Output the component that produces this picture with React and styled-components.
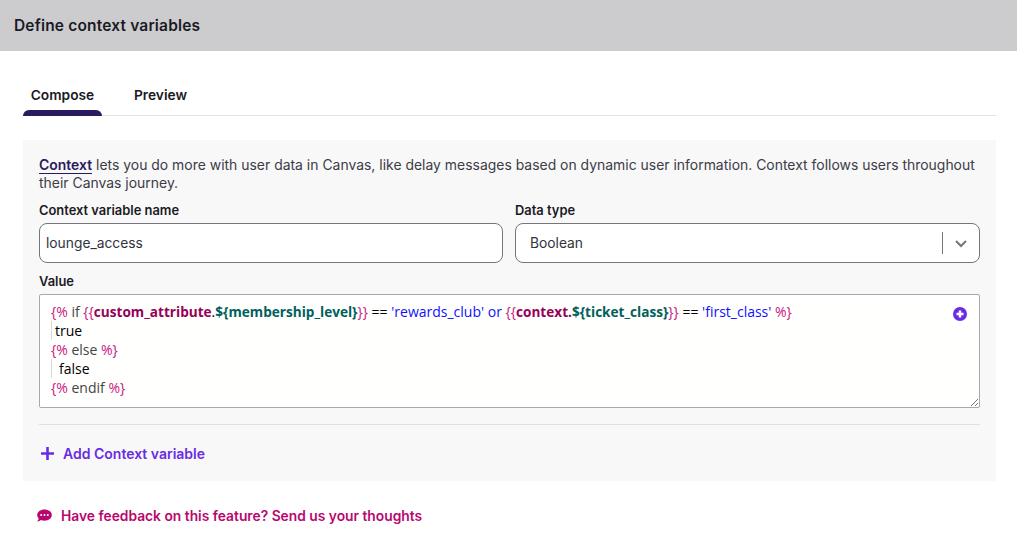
import React from "react";
import styled, { createGlobalStyle } from "styled-components";

const Global = createGlobalStyle`
  html, body { margin: 0; padding: 0; background: #fff; }
  body { font-family: "Inter", "Liberation Sans", sans-serif; color: #1d1b26; width: 1017px; height: 551px; overflow: hidden; }
`;
const Header = styled.header`
  height: 51px; background: #cccccf; display: flex; align-items: center; padding: 0 14px 1px;
  box-sizing: border-box;
  font-size: 15.5px; font-weight: 600; letter-spacing: .17px; color: #1b1a24;
`;
const Main = styled.main`
  padding: 29px 21px 0 23px;
`;
const Tabs = styled.nav`
  display: flex; height: 35px; border-bottom: 1px solid #e3e3e8; box-sizing: content-box;
`;
const Tab = styled.div`
  position: relative; width: ${p => p.$w}px; text-align: center; font-size: 13.75px; font-weight: 600;
  line-height: 30px; color: #1b1a24;
  ${p => p.$active && `
    &::after { content: ""; position: absolute; left: 0; right: 0; bottom: -1px; height: 6px;
      background: #2a1a5e; border-radius: 6px 6px 0 0; }
  `}
`;
const Panel = styled.section`
  margin-top: 24px; background: #f8f8f9; padding: 16px 16px 0; height: 341px; box-sizing: border-box;
`;
const Intro = styled.p`
  margin: 0; font-size: 13.94px; line-height: 18px; color: #3d3c47;
`;
const Strong = styled.span`
  font-weight: 600; color: #2a1a5e; border-bottom: 1px solid #2a1a5e;
`;
const FieldRow = styled.div`
  display: grid; grid-template-columns: 464px 465px; gap: 12px; margin-top: 11px;
`;
const Label = styled.label`
  display: block; font-size: 12.9px; font-weight: 600; line-height: 16px; color: #1b1a24; margin-bottom: 4px;
`;
const Input = styled.div`
  height: 40px; box-sizing: border-box; background: #fff; border: 1px solid #76757e; border-radius: 8px;
  display: flex; align-items: center; padding-left: ${p => p.$pad}px; font-size: 13.8px; color: #33323c;
`;
const SelectSpacer = styled.span`flex: 1;`;
const Sep = styled.span`width: 1px; height: 22px; background: #76757e;`;
const Chevron = styled.span`
  width: 36px; display: flex; justify-content: center; color: #76757e;
`;
const ValueLabel = styled(Label)`margin-top: 11px; margin-bottom: 4px;`;
const Editor = styled.div`
  position: relative; width: 941px; height: 114px; box-sizing: border-box; background: #fffffe;
  border: 1px solid #a9a9ad; border-radius: 2px; padding: 7px 11px;
  font-family: "Open Sans", sans-serif; font-size: 14px; line-height: 19px; color: #000;
`;
const Line = styled.div`
  white-space: pre; height: 19px; display: block;
`;
const Indent = styled.span`
  display: inline-block; height: 19px; vertical-align: top; border-left: 1px solid #d8d8d8; margin-left: 0;
  width: ${p => p.$w}px;
`;
const Delim = styled.span`color: #c9177e;`;
const Kw = styled.span`color: #444;`;
const Blue = styled.span`color: #0f0fff;`;
const Attr = styled.span`font-weight: 700; font-size: 13.6px; color: #970058;`;
const Var = styled.span`font-weight: 700; font-size: 13.6px; color: #00615c;`;
const Insert = styled.span`
  position: absolute; top: 12px; right: 12px; width: 14px; height: 14px; line-height: 0;
`;
const Grip = styled.svg`
  position: absolute; right: 0; bottom: 0;
`;
const Divider = styled.hr`
  width: 941px; margin: 16px 0 0; border: 0; border-top: 1px solid #dfdfe4;
`;
const AddRow = styled.div`
  display: flex; align-items: center; gap: 9px; margin-top: 20px; padding-left: 2px;
  font-size: 14px; font-weight: 600; color: #6a2be2;
`;
const Feedback = styled.div`
  display: flex; align-items: center; gap: 9px; margin-top: 27px; padding-left: 14px;
  font-size: 13.8px; font-weight: 600; color: #b8076f;
`;

export default function App() {
  return (
    <>
      <Global />
      <Header>Define context variables</Header>
      <Main>
        <Tabs>
          <Tab $active $w={79}>Compose</Tab>
          <Tab $w={117}>Preview</Tab>
        </Tabs>
        <Panel>
          <Intro>
            <Strong>Context</Strong> lets you do more with user data in Canvas, like delay messages based on dynamic user information. Context follows users throughout their Canvas journey.
          </Intro>
          <FieldRow>
            <div>
              <Label>Context variable name</Label>
              <Input $pad={6}>lounge_access</Input>
            </div>
            <div>
              <Label>Data type</Label>
              <Input $pad={14}>
                Boolean
                <SelectSpacer />
                <Sep />
                <Chevron>
                  <svg width="14" height="14" viewBox="0 0 14 14" fill="none" stroke="currentColor" strokeWidth="2"><path d="M2 5l5 5 5-5" /></svg>
                </Chevron>
              </Input>
            </div>
          </FieldRow>
          <ValueLabel>Value</ValueLabel>
          <Editor>
            <Line><Delim>{"{%"}</Delim> <Kw>if</Kw> <Delim>{"{{"}</Delim><Attr>custom_attribute</Attr>.<Var>{"${membership_level}"}</Var><Delim>{"}}"}</Delim> == <Blue>'rewards_club'</Blue> <Blue>or</Blue> <Delim>{"{{"}</Delim><Attr>context.</Attr><Var>{"${ticket_class}"}</Var><Delim>{"}}"}</Delim> == <Blue>'first_class'</Blue> <Delim>{"%}"}</Delim></Line>
            <Line><Indent $w={3} />true</Line>
            <Line><Delim>{"{%"}</Delim> <Kw>else</Kw> <Delim>{"%}"}</Delim></Line>
            <Line><Indent $w={7} />false</Line>
            <Line><Delim>{"{%"}</Delim> <Kw>endif</Kw> <Delim>{"%}"}</Delim></Line>
            <Insert>
              <svg width="14" height="14" viewBox="0 0 14 14"><circle cx="7" cy="7" r="7" fill="#6a2be2" /><path d="M7 3.5v7M3.5 7h7" stroke="#fff" strokeWidth="2.4" /></svg>
            </Insert>
            <Grip width="10" height="10" viewBox="0 0 10 10" stroke="#777" strokeWidth="1"><path d="M9 2L2 9M9 6L6 9" /></Grip>
          </Editor>
          <Divider />
          <AddRow>
            <svg width="13" height="13" viewBox="0 0 13 13" fill="none" stroke="#6a2be2" strokeWidth="2.6"><path d="M6.5 0v13M0 6.5h13" /></svg>
            Add Context variable
          </AddRow>
        </Panel>
        <Feedback>
          <svg width="15" height="14" viewBox="0 0 15 14"><path d="M7.5 0.5C3.4 0.5 0.2 2.9 0.2 6c0 1.3.6 2.5 1.5 3.4-.3 1.2-1.1 2.4-1.6 3 1.6 0 3-.7 3.9-1.3 1.1.4 2.3.6 3.5.6 4.1 0 7.3-2.5 7.3-5.7S11.6 0.5 7.5 0.5z" fill="#b8076f"/><circle cx="4.2" cy="6" r="1" fill="#fff"/><circle cx="7.5" cy="6" r="1" fill="#fff"/><circle cx="10.8" cy="6" r="1" fill="#fff"/></svg>
          Have feedback on this feature? Send us your thoughts
        </Feedback>
      </Main>
    </>
  );
}
